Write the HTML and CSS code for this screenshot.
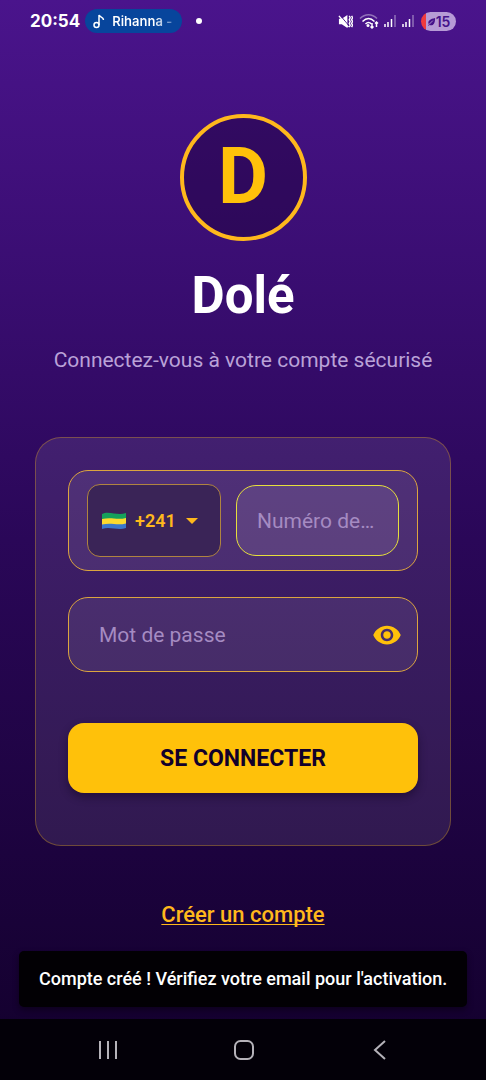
FILE: index.html
```html
<!DOCTYPE html>
<html lang="fr">
<head>
<meta charset="utf-8">
<meta name="viewport" content="width=device-width, initial-scale=1">
<title>Dolé</title>
<link rel="stylesheet" href="styles.css">
</head>
<body>
<div class="screen">
  <header class="status">
    <span class="clock">20:54</span>
    <span class="now-playing">
      <svg class="note" viewBox="0 0 12 16" aria-hidden="true"><circle cx="3.500" cy="12" r="2.500"/><path d="M6 12V2c1 2.500 4.500 2 4.500 5"/></svg>
      <span class="track">Rihanna -</span>
    </span>
    <span class="dot"></span>
    <span class="indicators">
      <svg class="mute" viewBox="0 0 16 16" aria-hidden="true"><path class="fill" d="M1 5h3l6-4v14l-6-4H1z"/><path class="cut" d="M2 1l10 12"/><path class="line" d="M1 2l10 12M12 2l1 2-1 2 1 2-1 2 1 2-1 2M14.500 2l1 2-1 2 1 2-1 2 1 2-1 2"/></svg>
      <svg class="wifi" viewBox="0 0 20 16" aria-hidden="true"><path class="faint" d="M1 5.500c5-5 12-5 17 0"/><path d="M3.500 8.500c4-4 8-4 12 0M6.500 11c2-2 4-2 6 0"/><circle class="fill" cx="9" cy="12.500" r="1.500"/><path d="M13 10v5m-1.500-1.500L13 15l1.500-1.500M17.500 14V9M16 10.500L17.500 9l1.500 1.500"/></svg>
      <svg class="signal" viewBox="0 0 14 14" aria-hidden="true"><path d="M2 10v3M5 8v5M8.500 5v8"/><path class="faint" d="M12 1v12"/></svg>
      <svg class="signal" viewBox="0 0 14 14" aria-hidden="true"><path d="M2 10v3M5 8v5M8.500 5v8"/><path class="faint" d="M12 1v12"/></svg>
      <span class="battery">
        <svg class="leaf" viewBox="0 0 10 12" aria-hidden="true"><path d="M9 2c0 6-2 9-6 8L1 11l1-2C0 5 4 3 9 2z"/><path class="vein" d="M2 9.500L6.500 5"/></svg>
        <span>15</span>
      </span>
    </span>
  </header>

  <main class="content">
    <div class="logo">D</div>
    <h1 class="title">Dolé</h1>
    <p class="subtitle">Connectez-vous à votre compte sécurisé</p>

    <form class="card">
      <div class="phone">
        <button type="button" class="country" aria-label="Indicatif du pays, Gabon +241">
          <svg class="flag" viewBox="0 0 26 18" aria-hidden="true">
            <path fill="#15a15b" d="M1 2c4-2 8-1 12-.5s8 1 12-.5v6H1z"/>
            <path fill="#3a78cc" d="M1 11h24v5c-4 1.500-8 1-12 .5s-8-1-12 .5z"/>
            <path fill="#fcd92d" d="M1 7c4-1 8-1 12-.5s8 .5 12-.5v5.500c-4 1-8 1-12 .5s-8-.5-12 .5z"/>
          </svg>
          <span>+241</span>
          <svg class="caret" viewBox="0 0 12 6" aria-hidden="true"><path d="M0 0h12L6 6z"/></svg>
        </button>
        <input class="number" type="tel" placeholder="Numéro de téléphone" aria-label="Numéro de téléphone">
      </div>
      <div class="password">
        <input class="secret" type="password" placeholder="Mot de passe" aria-label="Mot de passe">
        <button type="button" class="reveal" aria-label="Afficher le mot de passe">
          <svg viewBox="1 4 22 16" aria-hidden="true"><path d="M12 4.500C7 4.500 2.730 7.610 1 12c1.730 4.390 6 7.500 11 7.500s9.270-3.110 11-7.500c-1.730-4.390-6-7.500-11-7.500zM12 17c-2.760 0-5-2.240-5-5s2.240-5 5-5 5 2.240 5 5-2.240 5-5 5zm0-8c-1.660 0-3 1.340-3 3s1.340 3 3 3 3-1.340 3-3-1.340-3-3-3z"/></svg>
        </button>
      </div>
      <button type="submit" class="submit">SE CONNECTER</button>
    </form>

    <a class="register" href="#">Créer un compte</a>
  </main>

  <div class="snackbar" role="status">Compte créé ! Vérifiez votre email pour l'activation.</div>

  <nav class="system-nav">
    <button type="button" aria-label="Applications récentes"><svg viewBox="0 0 22 22" aria-hidden="true"><path d="M3 2v18M11 2v18M19 2v18"/></svg></button>
    <button type="button" aria-label="Accueil"><svg viewBox="0 0 22 22" aria-hidden="true"><rect x="2" y="2" width="18" height="18" rx="5.500"/></svg></button>
    <button type="button" aria-label="Retour"><svg viewBox="0 0 22 22" aria-hidden="true"><path d="M16 2L6 11l10 9"/></svg></button>
  </nav>
</div>
</body>
</html>
```
FILE: styles.css
```css
* {
  box-sizing: border-box;
}

body {
  margin: 0;
  font-family: Roboto, "Liberation Sans", sans-serif;
  color: #fff;
}

button,
input {
  font: inherit;
  color: inherit;
}

button {
  padding: 0;
  border: 0;
  background: none;
  cursor: pointer;
}

.screen {
  min-height: 100vh;
  display: flex;
  flex-direction: column;
  background: linear-gradient(#4a148c, #2a0758 50%, #12002b);
}

.status {
  display: flex;
  align-items: center;
  height: 42px;
  padding: 0 30px;
}

.clock {
  font: 700 17px Inter, sans-serif;
}

.now-playing {
  display: flex;
  align-items: center;
  gap: 7px;
  height: 24px;
  margin-left: 5px;
  padding: 0 10px 0 8px;
  border-radius: 12px;
  background: #07459c;
  font: 600 13px Inter, sans-serif;
}

.track {
  background: linear-gradient(90deg, #fff 70%, #5a86c4);
  background-clip: text;
  color: transparent;
}

.note {
  width: 12px;
  height: 16px;
  fill: none;
  stroke: #fff;
  stroke-width: 1.5;
}

.dot {
  width: 6px;
  height: 6px;
  margin-left: 14px;
  border-radius: 50%;
  background: #fff;
}

.indicators {
  display: flex;
  align-items: center;
  gap: 4px;
  margin-left: auto;
}

.indicators svg {
  fill: none;
  stroke: #fff;
  stroke-width: 1.5;
}

.indicators .fill {
  fill: #fff;
  stroke: none;
}

.indicators .faint {
  opacity: 0.4;
}

.mute {
  width: 15px;
  height: 15px;
  margin-right: 2px;
}

.mute .cut {
  stroke: #46128a;
  stroke-width: 1;
}

.mute .line {
  stroke-width: 1.5;
}

.wifi {
  width: 20px;
  height: 16px;
}

.signal {
  width: 14px;
  height: 14px;
}

.battery {
  display: flex;
  align-items: center;
  justify-content: center;
  width: 35px;
  height: 19px;
  margin-left: 2px;
  border-radius: 10px;
  background: linear-gradient(90deg, #f03b3e 15%, #b79bd6 15%);
  color: #46128a;
  font: 600 14px Inter, sans-serif;
}

.indicators .leaf {
  width: 9px;
  height: 11px;
  fill: #46128a;
  stroke: none;
}

.leaf .vein {
  stroke: #b79bd6;
  stroke-width: 1;
}

.content {
  flex: 1;
  display: flex;
  flex-direction: column;
  align-items: center;
  padding: 72px 35px 20px;
}

.logo {
  display: flex;
  align-items: center;
  justify-content: center;
  width: 127px;
  height: 127px;
  border: 4px solid #ffb81c;
  border-radius: 50%;
  background: rgba(26, 0, 51, 0.4);
  color: #ffc10a;
  font-size: 77px;
  font-weight: 700;
  line-height: 1;
}

.title {
  margin: 25px 0 0;
  font-size: 51px;
  font-weight: 700;
  line-height: 60px;
}

.subtitle {
  margin: 22px 0 0;
  color: #baa2d8;
  font-size: 21px;
  line-height: 24px;
  text-align: center;
}

.card {
  display: flex;
  flex-direction: column;
  width: 100%;
  margin-top: 65px;
  padding: 32px;
  border: 1px solid rgba(255, 193, 7, 0.3);
  border-radius: 26px;
  background: linear-gradient(rgba(255, 255, 255, 0.09), rgba(255, 255, 255, 0.09));
}

.phone {
  display: flex;
  align-items: center;
  gap: 15px;
  padding: 13px 18px;
  border: 1px solid #dca53f;
  border-radius: 20px;
  background: rgba(255, 255, 255, 0.08);
}

.country {
  flex: none;
  display: flex;
  align-items: center;
  gap: 8px;
  width: 134px;
  height: 73px;
  padding: 0 13px;
  border: 1px solid #b08440;
  border-radius: 13px;
  background: #3a2457;
  color: #ffb81c;
  font-size: 18px;
  font-weight: 600;
}

.flag {
  width: 26px;
  height: 18px;
}

.caret {
  width: 12px;
  height: 6px;
  margin-left: 2px;
  fill: #ffb81c;
}

.number {
  flex: 1;
  min-width: 0;
  height: 71px;
  padding: 0 20px;
  border: 1px solid #e6df3c;
  border-radius: 20px;
  background: rgba(255, 255, 255, 0.09);
  font-size: 21px;
  text-overflow: ellipsis;
  outline: none;
}

.number::placeholder,
.secret::placeholder {
  color: #a58bc2;
  opacity: 1;
  text-overflow: ellipsis;
}

.password {
  display: flex;
  align-items: center;
  height: 75px;
  margin-top: 26px;
  padding: 0 16px 0 30px;
  border: 1px solid #dca53f;
  border-radius: 20px;
  background: rgba(255, 255, 255, 0.08);
}

.secret {
  flex: 1;
  min-width: 0;
  height: 100%;
  padding: 0;
  border: 0;
  background: none;
  font-size: 21px;
  outline: none;
}

.reveal svg {
  display: block;
  width: 28px;
  height: 20px;
  fill: #ffc10a;
}

.submit {
  height: 70px;
  margin: 51px 0 20px;
  border-radius: 16px;
  background: #ffc10a;
  box-shadow: 0 4px 8px rgba(15, 0, 30, 0.45);
  color: #12002b;
  font-size: 23px;
  font-weight: 700;
}

.register {
  margin-top: 56px;
  color: #ffb81c;
  font-size: 22px;
  font-weight: 500;
  line-height: 26px;
  text-decoration-thickness: 1px;
  text-underline-offset: 2px;
  text-decoration-skip-ink: none;
}

.snackbar {
  margin: 0 19px 12px;
  padding: 16px 12px 16px 20px;
  border-radius: 5px;
  background: #020004;
  box-shadow: 0 3px 6px rgba(0, 0, 0, 0.4);
  font-size: 18px;
  font-weight: 500;
  line-height: 24px;
}

.system-nav {
  display: flex;
  align-items: center;
  justify-content: space-around;
  height: 61px;
  padding: 0 38px 0 40px;
  background: #030008;
}

.system-nav svg {
  display: block;
  width: 22px;
  height: 22px;
  fill: none;
  stroke: #b5b2b9;
  stroke-width: 2;
}
```
